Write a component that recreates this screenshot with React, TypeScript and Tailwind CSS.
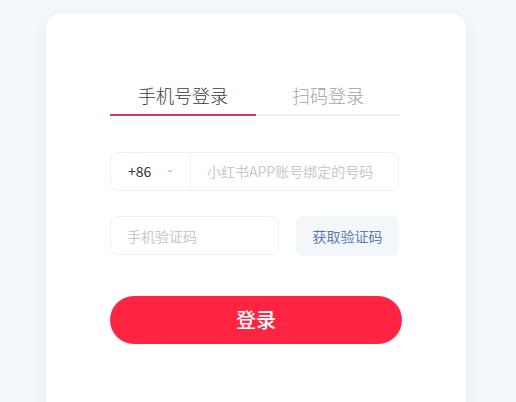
import React, { useState } from 'react';

const App: React.FC = () => {
    const [tab, setTab] = useState<number>(0);
    const [phone, setPhone] = useState<string>("");
    const [code, setCode] = useState<string>("");

    return (
        <div
            className="w-[516px] h-[402px] overflow-hidden bg-[#f4f7fa] pl-[46px] pt-[14px]"
            style={{ fontFamily: '"Noto Sans CJK SC", "Liberation Sans", sans-serif' }}
        >
            <div className="w-[420px] h-[420px] bg-white rounded-[14px] shadow-[0_4px_14px_rgba(30,50,80,0.06)] px-[64px] pt-[68px]">
                <div className="flex w-[290px]">
                    <button
                        type="button"
                        onClick={() => setTab(0)}
                        className={`w-[146px] h-[34px] border-b-2 text-[18px] font-light leading-[26px] pb-[6px] ${tab === 0 ? 'border-[#d3385d] text-[#3a3a3a]' : 'border-[#eeeeee] text-[#a3a3a3]'}`}
                    >
                        手机号登录
                    </button>
                    <button
                        type="button"
                        onClick={() => setTab(1)}
                        className={`flex-1 h-[34px] border-b-2 text-[18px] font-light leading-[26px] pb-[6px] ${tab === 1 ? 'border-[#d3385d] text-[#3a3a3a]' : 'border-[#eeeeee] text-[#a3a3a3]'}`}
                    >
                        扫码登录
                    </button>
                </div>

                <div className="mt-[36px] flex h-[39px] w-[289px] items-center rounded-[8px] border border-[#f0f0f0]">
                    <div className="flex h-full w-[80px] items-center border-r border-[#f0f0f0] pl-[17px]">
                        <span className="text-[14px] text-[#333]">+86</span>
                        <svg className="ml-[16px]" width="6" height="4" viewBox="0 0 6 4">
                            <path d="M0 0 L6 0 L3 3 Z" fill="#d0d0d0" />
                        </svg>
                    </div>
                    <input
                        type="text"
                        value={phone}
                        onChange={(e) => setPhone(e.target.value)}
                        placeholder="小红书APP账号绑定的号码"
                        className="ml-[16px] w-[190px] bg-transparent text-[14px] text-[#333] outline-none placeholder:text-[#c8c8c8]"
                    />
                </div>

                <div className="mt-[25px] flex w-[289px] gap-[17px]">
                    <input
                        type="text"
                        value={code}
                        onChange={(e) => setCode(e.target.value)}
                        placeholder="手机验证码"
                        className="h-[39px] w-[169px] rounded-[8px] border border-[#f0f0f0] px-[16px] text-[14px] text-[#333] outline-none placeholder:text-[#c8c8c8]"
                    />
                    <button
                        type="button"
                        className="h-[40px] flex-1 rounded-[8px] bg-[#f3f7fc] text-[14px] text-[#5a7bb5]"
                    >
                        获取验证码
                    </button>
                </div>

                <button
                    type="button"
                    className="mt-[40px] h-[48px] w-[292px] rounded-full bg-[#ff2442] text-[20px] font-medium text-white"
                >
                    登录
                </button>
            </div>
        </div>
    );
}

export default App;
